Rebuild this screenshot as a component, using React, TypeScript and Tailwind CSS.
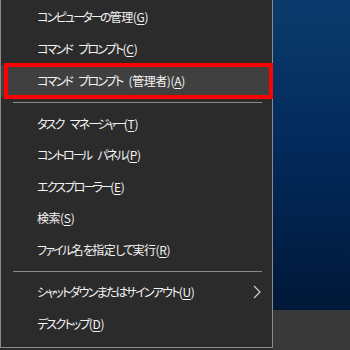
import React from "react";

type Item = { label: string; key: string; sub?: boolean; hl?: boolean };

const group1: Item[] = [
  { label: "コンピューターの管理", key: "G" },
  { label: "コマンド プロンプト", key: "C" },
  { label: "コマンド プロンプト (管理者)", key: "A", hl: true },
];
const group2: Item[] = [
  { label: "タスク マネージャー", key: "T" },
  { label: "コントロール パネル", key: "P" },
  { label: "エクスプローラー", key: "E" },
  { label: "検索", key: "S" },
  { label: "ファイル名を指定して実行", key: "R" },
];
const group3: Item[] = [
  { label: "シャットダウンまたはサインアウト", key: "U", sub: true },
  { label: "デスクトップ", key: "D" },
];

function Label({ text }: { text: string }) {
  const chars = Array.from(text);
  return (
    <span>
      {chars.map((c, i) => {
        if (c === " ") return <span key={i} className="inline-block w-[6px]" />;
        let cls = "tracking-[-1.8px]";
        if (/[\u4e00-\u9fff]/.test(c)) cls = "tracking-[-0.5px]";
        else if (c === "ー") cls = "tracking-[-2.8px]";
        else if (c === "(" || c === ")") cls = "tracking-[-0.3px]";
        return (
          <span key={i} className={cls}>
            {c}
          </span>
        );
      })}
    </span>
  );
}

function Row({ item, h }: { item: Item; h: string }) {
  return (
    <div
      className={
        "relative flex items-center pl-[36px] pr-[12px] text-[12px] text-[#f4f4f4] " +
        h +
        (item.hl ? " bg-[#404040]" : "")
      }
    >
      {item.hl && (
        <div className="absolute left-[3px] right-[-1px] top-[-2px] bottom-[-2px] border-[4px] border-[#ff0000]" />
      )}
      <span className="relative flex-1 whitespace-nowrap">
        <Label text={item.label} />
        <span className="tracking-[-0.3px]">
          (<span className="underline underline-offset-2">{item.key}</span>)
        </span>
      </span>
      {item.sub && (
        <svg width="8" height="14" viewBox="0 0 8 14" className="mr-[-1px]">
          <path d="M1 1 L7 7 L1 13" fill="none" stroke="#d0d0d0" strokeWidth="1.2" />
        </svg>
      )}
    </div>
  );
}

function Sep({ h }: { h: string }) {
  return (
    <div className={"flex items-center pl-[12px] pr-[10px] " + h}>
      <div className="h-px w-full bg-[#8a8a8a]" />
    </div>
  );
}

export default function App() {
  return (
    <div
      className="flex h-[350px] w-[350px] overflow-hidden bg-[#2b2b2b] [font-feature-settings:'palt']"
      style={{ fontFamily: '"Noto Sans CJK JP", "Noto Sans", sans-serif' }}
    >
      <div className="flex h-[348px] w-[273px] flex-col border-b border-l border-r border-[#8a8a8a] bg-[#2b2b2b] pt-px">
        {group1.map((i) => (
          <Row key={i.key} item={i} h="h-[32px]" />
        ))}
        <Sep h="h-[11px]" />
        {group2.map((i) => (
          <Row key={i.key} item={i} h="h-[31.5px]" />
        ))}
        <Sep h="h-[11px]" />
        {group3.map((i) => (
          <Row key={i.key} item={i} h="h-[31.5px]" />
        ))}
      </div>
      <div className="flex flex-1 flex-col">
        <div className="h-[310px] bg-gradient-to-b from-[#0b3b6d] via-[#03295a] to-[#001838]" />
        <div className="flex-1 bg-[#393939]" />
      </div>
    </div>
  );
}
